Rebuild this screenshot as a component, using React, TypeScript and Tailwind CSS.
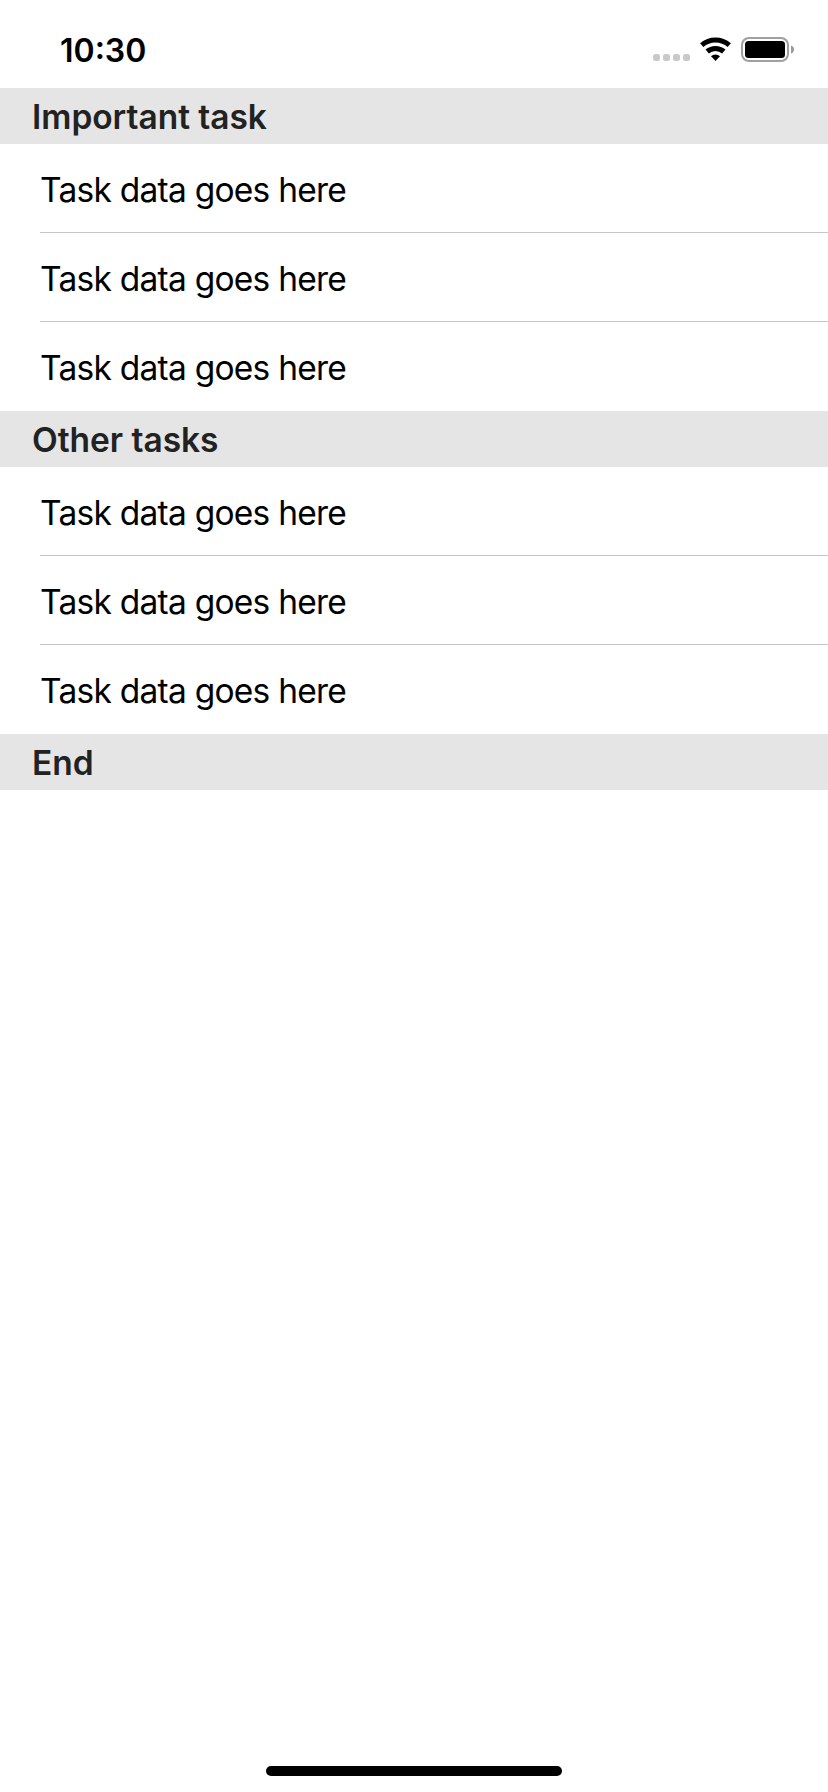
const sections = [
  { title: 'Important task', rows: 3 },
  { title: 'Other tasks', rows: 3 },
  { title: 'End', rows: 0 },
];

function StatusBar() {
  return (
    <header className="flex h-[88px] shrink-0 items-start justify-between pl-[60px] pr-[34px] text-black">
      <span className="mt-[31px] text-[32px] font-semibold leading-[39px]">10:30</span>
      <svg className="mt-[34px]" width="142" height="30" viewBox="652 34 142 30" fill="none">
        <g fill="#c9c9c9">
          <rect x="653" y="54" width="7" height="7" rx="2.5" />
          <rect x="663" y="54" width="7" height="7" rx="2.5" />
          <rect x="673" y="54" width="7" height="7" rx="2.5" />
          <rect x="683" y="54" width="7" height="7" rx="2.5" />
        </g>
        <path d="M701.7 45.2A21 21 0 0 1 729.3 45.2" stroke="#000" strokeWidth="5" />
        <path d="M707.2 51.5A12.6 12.6 0 0 1 723.8 51.5" stroke="#000" strokeWidth="5" />
        <path d="M711 56.3A6.7 6.7 0 0 1 720 56.3L715.5 61Z" fill="#000" />
        <rect x="742" y="38" width="46" height="23" rx="7" stroke="#a0a0a0" strokeWidth="2" />
        <rect x="745" y="41" width="40" height="17" rx="3.5" fill="#000" />
        <path d="M791 45.5Q794 46.5 794 49.5Q794 52.5 791 53.5Z" fill="#999" />
      </svg>
    </header>
  );
}

export default function App() {
  return (
    <div className="flex h-[1792px] w-[828px] flex-col bg-white font-['Inter',sans-serif]">
      <StatusBar />
      <main className="flex-1">
        {sections.map(({ title, rows }) => (
          <section key={title}>
            <h2 className="h-14 bg-[#e5e5e5] pl-8 pt-[9px] text-[33.5px] font-semibold leading-[40px] tracking-[-0.03px] text-[#222]">
              {title}
            </h2>
            <ul className="pl-10">
              {Array.from({ length: rows }, (_, i) => (
                <li
                  key={i}
                  className="h-[89px] border-b border-[#c6c6c8] pt-[26px] text-[33.5px] leading-[40px] tracking-[-0.75px] text-black last:border-b-0"
                >
                  Task data goes here
                </li>
              ))}
            </ul>
          </section>
        ))}
      </main>
      <footer className="mx-auto mb-4 h-[10px] w-[296px] rounded-full bg-black" />
    </div>
  );
}
